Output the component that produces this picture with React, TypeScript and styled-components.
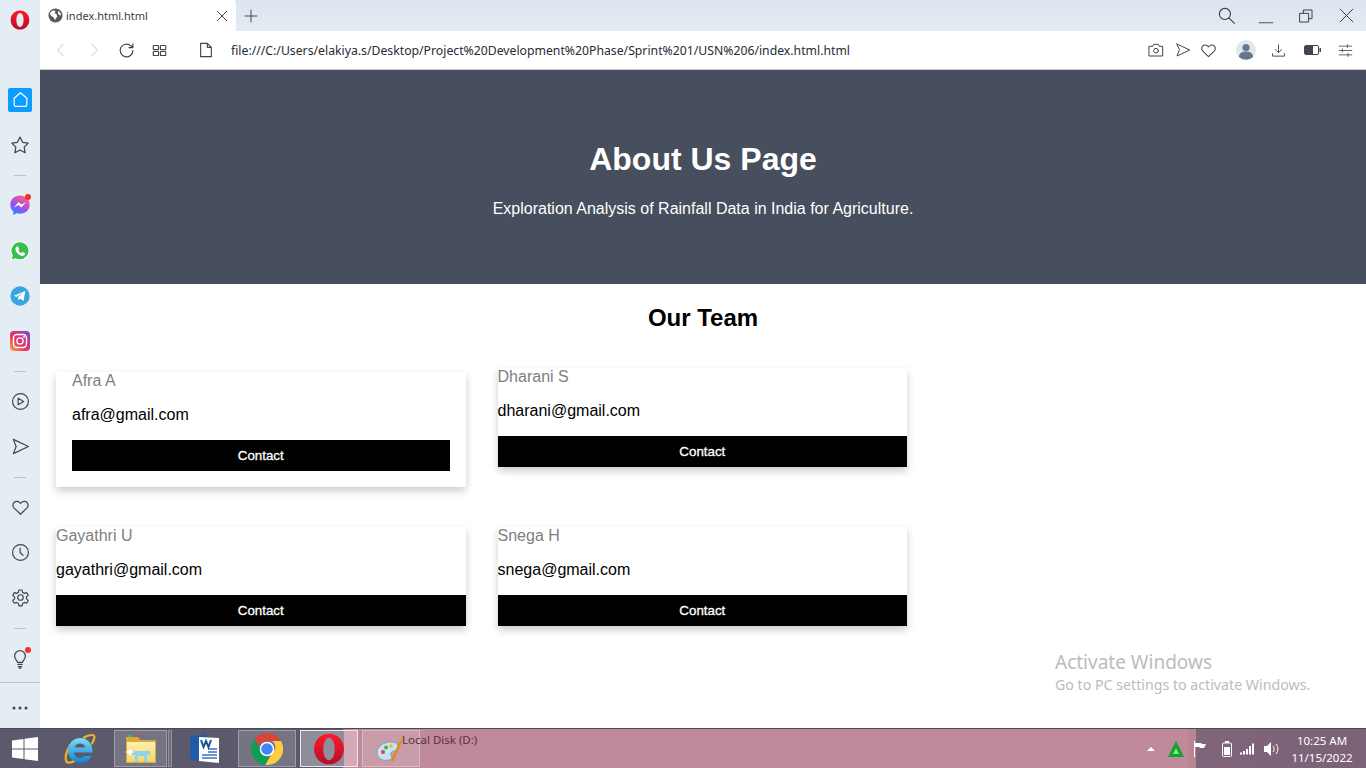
import styled, { createGlobalStyle } from "styled-components";
import type { ReactNode } from "react";

const Global = createGlobalStyle`
  html, body {
    margin: 0;
    padding: 0;
    background: #fff;
  }
  * {
    box-sizing: border-box;
  }
`;

const Screen = styled.div`
  position: relative;
  width: 1366px;
  height: 768px;
  overflow: hidden;
  display: flex;
  flex-direction: column;
  font-family: "Liberation Sans", Arial, sans-serif;
`;

const Browser = styled.div`
  flex: 1;
  min-height: 0;
  display: flex;
`;

/* left opera sidebar */
const Sidebar = styled.aside`
  width: 40px;
  flex: none;
  display: flex;
  flex-direction: column;
  background: #e4ecf4;
`;

const LogoSlot = styled.div`
  height: 40px;
  margin-bottom: 37px;
  display: flex;
  align-items: center;
  justify-content: center;
`;

const SideSlot = styled.div`
  position: relative;
  height: 45px;
  display: flex;
  align-items: center;
  justify-content: center;
`;

const HomeTile = styled.div`
  width: 24px;
  height: 24px;
  border-radius: 2px;
  background: #0a9dff;
  display: flex;
  align-items: center;
  justify-content: center;
`;

const SideSep = styled.div`
  height: 16px;
  display: flex;
  align-items: center;
  justify-content: center;
  &::after {
    content: "";
    width: 12px;
    height: 1px;
    background: #b9c3ce;
  }
`;

const Dot = styled.span`
  position: absolute;
  top: 11px;
  right: 9px;
  width: 6px;
  height: 6px;
  border-radius: 50%;
  background: #fb2c2c;
`;

const SideFooter = styled.div`
  margin-top: auto;
  height: 46px;
  border-top: 1px solid #bcc4cc;
  display: flex;
  align-items: center;
  justify-content: center;
  padding-top: 5px;
`;

const Window = styled.div`
  flex: 1;
  min-width: 0;
  display: flex;
  flex-direction: column;
`;

const TabStrip = styled.div`
  height: 31px;
  flex: none;
  display: flex;
  align-items: stretch;
  background: linear-gradient(#dde5ee, #e3eaf2);
`;

const Tab = styled.div`
  width: 196px;
  background: #fff;
  border-top-right-radius: 3px;
  display: flex;
  align-items: center;
  padding: 0 6px 0 8px;
  gap: 3px;
  font-family: "Noto Sans", sans-serif;
  font-size: 11px;
  color: #3a3a4a;
`;

const TabTitle = styled.span`
  flex: 1;
`;

const NewTab = styled.div`
  width: 30px;
  display: flex;
  align-items: center;
  justify-content: center;
`;

const WinControls = styled.div`
  margin-left: auto;
  display: flex;
`;

const WinButton = styled.div`
  width: 40px;
  display: flex;
  align-items: center;
  justify-content: center;
`;

const AddressBar = styled.div`
  height: 39px;
  flex: none;
  display: flex;
  align-items: center;
  padding-left: 4px;
  background: #fff;
  border-bottom: 1px solid #c6cacf;
`;

const ToolSlot = styled.div<{ $w?: number; $ml?: number }>`
  width: ${(p) => p.$w ?? 33}px;
  margin-left: ${(p) => p.$ml ?? 0}px;
  flex: none;
  display: flex;
  align-items: center;
  justify-content: center;
`;

const Url = styled.div`
  margin-left: 9px;
  font-family: "Noto Sans", sans-serif;
  font-size: 12.24px;
  color: #2a2a35;
  white-space: nowrap;
`;

const ToolsRight = styled.div`
  margin-left: auto;
  padding-right: 8px;
  display: flex;
  align-items: center;
`;

const Page = styled.main`
  flex: 1;
  min-height: 0;
  background: #fff;
`;

const Hero = styled.header`
  padding: 50px;
  background: #474e5d;
  color: #fff;
  text-align: center;
  h1 {
    margin: 21.44px 0;
    font-size: 32px;
    line-height: 37px;
  }
  p {
    margin: 16px 0;
    font-size: 16px;
    line-height: 18px;
  }
`;

const Heading = styled.h2`
  margin: 19.92px 0 0;
  font-size: 24px;
  line-height: 28px;
  text-align: center;
  color: #000;
`;

const TeamGrid = styled.section`
  display: grid;
  grid-template-columns: repeat(3, 33.3%);
  row-gap: 40px;
  align-items: start;
  margin-top: 36px;
`;

const Column = styled.div<{ $row: number }>`
  padding: 0 16px;
  grid-row: ${(p) => p.$row};
`;

const Card = styled.article<{ $padded?: boolean }>`
  margin-top: ${(p) => (p.$padded ? 4 : 0)}px;
  padding: ${(p) => (p.$padded ? "0 16px 16px" : "0")};
  box-shadow: 0 4px 8px 0 rgba(0, 0, 0, 0.2);
  background: #fff;
`;

const Name = styled.div`
  margin-bottom: 16px;
  font-size: 16px;
  line-height: 18px;
  color: #808080;
`;

const Email = styled.div`
  margin-bottom: 16px;
  font-size: 16px;
  line-height: 18px;
  color: #000;
`;

const ContactButton = styled.button`
  display: block;
  width: 100%;
  height: 31px;
  padding: 0;
  border: 0;
  background: #000;
  color: #fff;
  font-family: "Liberation Sans", Arial, sans-serif;
  font-size: 13.33px;
  -webkit-text-stroke: 0.3px #fff;
  text-align: center;
`;

const Watermark = styled.div`
  position: absolute;
  left: 1055px;
  top: 650px;
  font-family: "Noto Sans", sans-serif;
  color: #bcbcbc;
  pointer-events: none;
  white-space: nowrap;
  strong {
    display: block;
    font-weight: 400;
    font-size: 19px;
    line-height: 25px;
  }
  span {
    display: block;
    margin-top: 1px;
    font-size: 14.2px;
    line-height: 18px;
  }
`;

/* windows taskbar */
const Taskbar = styled.footer`
  position: relative;
  height: 40px;
  flex: none;
  display: flex;
  align-items: stretch;
  padding: 1px 0;
  background: linear-gradient(
    90deg,
    #5a5a6c 0,
    #5a5a6c 343px,
    #bf8a9a 343px,
    #bf8a9a 1188px,
    #b98595 1188px,
    #b98595 1196px,
    #80657a 1196px,
    #7c6277 100%
  );
  border-top: 1px solid #4b4a58;
`;

const StartSlot = styled.div`
  width: 50px;
  display: flex;
  align-items: center;
  justify-content: center;
`;

const TaskApp = styled.div<{ $w: number; $ml?: number; $boxed?: boolean; $active?: boolean }>`
  width: ${(p) => p.$w}px;
  margin-left: ${(p) => p.$ml ?? 0}px;
  flex: none;
  display: flex;
  align-items: center;
  justify-content: center;
  border: ${(p) =>
    p.$active
      ? "1px solid #f0e6ea"
      : p.$boxed
      ? "1px solid rgba(255,255,255,0.3)"
      : "1px solid transparent"};
  background: ${(p) =>
    p.$active
      ? "linear-gradient(90deg,#8e8d9a 0,#8e8d9a 43px,#d6a9b6 43px)"
      : p.$boxed
      ? "rgba(255,255,255,0.16)"
      : "transparent"};
`;

const Sliver = styled.div`
  width: 4px;
  margin-left: 1px;
  flex: none;
  border: 1px solid rgba(255, 255, 255, 0.25);
  background: rgba(255, 255, 255, 0.12);
`;

const DiskLabel = styled.span`
  position: absolute;
  left: 402px;
  top: 3px;
  font-family: "Noto Sans", sans-serif;
  font-size: 11.5px;
  line-height: 16px;
  color: #5f2f40;
  white-space: nowrap;
`;

const Tray = styled.div`
  margin-left: auto;
  padding-right: 2px;
  display: flex;
  align-items: center;
`;

const TraySlot = styled.div<{ $ml?: number }>`
  width: 16px;
  margin-left: ${(p) => p.$ml ?? 0}px;
  flex: none;
  display: flex;
  align-items: center;
  justify-content: center;
`;

const Clock = styled.div`
  width: 84px;
  flex: none;
  text-align: center;
  font-family: "Noto Sans", sans-serif;
  font-size: 11.5px;
  line-height: 17px;
  color: #fff;
`;

type IconProps = { size?: number; color?: string; w?: number };

const Ico = ({ size = 18, color = "#41454f", w = 1.5, children }: IconProps & { children: ReactNode }) => (
  <svg
    width={size}
    height={size}
    viewBox="0 0 24 24"
    fill="none"
    stroke={color}
    strokeWidth={w}
    strokeLinecap="round"
    strokeLinejoin="round"
  >
    {children}
  </svg>
);

const OperaLogo = ({ size = 20 }: { size?: number }) => (
  <svg width={size} height={size} viewBox="0 0 24 24">
    <defs>
      <linearGradient id={`op${size}`} x1="0" y1="0" x2="0" y2="1">
        <stop offset="0" stopColor="#ff1b2d" />
        <stop offset="1" stopColor="#b70c25" />
      </linearGradient>
    </defs>
    <path
      fillRule="evenodd"
      fill={`url(#op${size})`}
      d="M12 0.5C5.4 0.5 0.8 5.6 0.8 12s4.6 11.5 11.2 11.5S23.2 18.4 23.2 12 18.6 0.5 12 0.5zM12 3.6c2.6 0 4.3 3.7 4.3 8.4s-1.7 8.4-4.3 8.4-4.3-3.7-4.3-8.4S9.400 3.600 12 3.600z"
    />
  </svg>
);

const HomeIcon = () => (
  <Ico size={19} color="#fff" w={1.5}>
    <path d="M4 10.500 12 3.500l8 7V19a1.800 1.800 0 0 1-1.800 1.800H5.800A1.800 1.800 0 0 1 4 19z" />
  </Ico>
);
const StarIcon = () => (
  <Ico size={20} w={1.5}>
    <path d="M12 2.500 15.100 8.800 21.800 9.700 17 14.500 18.100 21.300 12 18 5.900 21.300 7 14.500 2.200 9.700 8.900 8.800z" />
  </Ico>
);
const SendIcon = ({ size = 19 }: { size?: number }) => (
  <Ico size={size}>
    <path d="M3 3 22 12 3 21 6.500 12z" />
  </Ico>
);
const HeartIcon = ({ size = 19 }: { size?: number }) => (
  <Ico size={size}>
    <path d="M12 20.500 4 12.800C1.800 10.500 2 7.200 4 5.400c2.200-1.900 5.600-1.500 8 1.400 2.400-2.900 5.800-3.300 8-1.400 2 1.800 2.200 5.100 0 7.400z" />
  </Ico>
);

const Messenger = () => (
  <svg width="20" height="21" viewBox="0 0 20 21">
    <defs>
      <linearGradient id="msg" x1="0.2" y1="1" x2="0.8" y2="0">
        <stop offset="0" stopColor="#1f8bff" />
        <stop offset="0.45" stopColor="#a24cf0" />
        <stop offset="1" stopColor="#ff6a6a" />
      </linearGradient>
    </defs>
    <path
      fill="url(#msg)"
      d="M10 .5C4.500.5.300 4.400.300 9.700c0 2.800 1.100 5.100 3 6.700V20l3.300-1.800c1 .3 2.200.5 3.400.5 5.500 0 9.700-3.900 9.700-9S15.500.5 10 .5z"
    />
    <path fill="#fff" d="M4 12.500 8.500 7l3 2.500L16 7l-4.500 5.500-3-2.500z" />
  </svg>
);

const Whatsapp = () => (
  <svg width="20" height="20" viewBox="0 0 20 20">
    <path fill="#fff" d="M10 .3a9.500 9.500 0 0 0-8.200 14.300L.4 19.700l5.300-1.400A9.500 9.500 0 1 0 10 .3z" />
    <path fill="#38bf4e" d="M10 1.300a8.500 8.500 0 0 0-7.200 13l-1 3.900 4-1A8.500 8.500 0 1 0 10 1.300z" />
    <path
      fill="#fff"
      d="M7.300 5.200c-.5 0-1.900 1-1.900 2.900 0 3 3.900 6.800 7 6.800 1.800 0 2.700-1.400 2.700-2.200 0-.6-2.100-1.700-2.600-1.700-.4 0-.8 1-1.200 1-.8 0-2.800-1.900-2.800-2.700 0-.4.800-.8.800-1.200 0-.5-1.100-2.900-2-2.900z"
    />
  </svg>
);

const Telegram = () => (
  <svg width="20" height="20" viewBox="0 0 20 20">
    <circle cx="10" cy="10" r="9.700" fill="#37a6de" />
    <path fill="#fff" d="M3.800 9.800 15.300 5l-1.800 10-3.400-2.500-1.700 1.700-.4-3 4.800-4.400L6.500 11z" />
  </svg>
);

const Instagram = () => (
  <svg width="20" height="20" viewBox="0 0 20 20">
    <defs>
      <linearGradient id="ig" x1="0" y1="1" x2="1" y2="0">
        <stop offset="0" stopColor="#fdb43a" />
        <stop offset="0.4" stopColor="#e8355f" />
        <stop offset="0.75" stopColor="#b53a9f" />
        <stop offset="1" stopColor="#5b55c7" />
      </linearGradient>
    </defs>
    <rect width="20" height="20" rx="4" fill="url(#ig)" />
    <rect x="3.500" y="3.500" width="13" height="13" rx="3.500" fill="none" stroke="#fff" strokeWidth="1.400" />
    <circle cx="10" cy="10" r="3.100" fill="none" stroke="#fff" strokeWidth="1.400" />
    <circle cx="14" cy="6" r=".9" fill="#fff" />
  </svg>
);

const PlayIcon = () => (
  <Ico size={19}>
    <circle cx="12" cy="12" r="10" />
    <path d="M9 8l7 4-7 4z" />
  </Ico>
);
const ClockIcon = () => (
  <Ico size={19}>
    <circle cx="12" cy="12" r="10" />
    <path d="M11.500 6.500V12l3.500 3.500" />
  </Ico>
);
const GearIcon = () => (
  <Ico size={19}>
    <circle cx="12" cy="12" r="3.500" />
    <path d="M10 2.500h4l.6 3 2.300 1.300 2.900-1 2 3.400-2.300 2v2.600l2.300 2-2 3.400-2.900-1-2.300 1.300-.6 3h-4l-.6-3-2.300-1.300-2.900 1-2-3.400 2.300-2v-2.600l-2.300-2 2-3.400 2.900 1 2.300-1.300z" />
  </Ico>
);
const BulbIcon = () => (
  <Ico size={20}>
    <path d="M9 16c0-2-3.500-3.300-3.500-7.500A6.500 6.500 0 0 1 18.500 8.500c0 4.200-3.500 5.500-3.500 7.500zM9.500 18.500h5M10 21h4M11 23h2" />
  </Ico>
);

const TraySignal = () => (
  <svg width="16" height="12" viewBox="0 0 16 12" fill="#fff">
    <rect x="0" y="9.500" width="2" height="2" />
    <rect x="3" y="8" width="2" height="3.500" />
    <rect x="6" y="6" width="2" height="5.500" />
    <rect x="9" y="3" width="2" height="8.500" />
    <rect x="12" y="0.500" width="2" height="11" />
  </svg>
);

const IEIcon = () => (
  <svg width="32" height="32" viewBox="0 0 32 32">
    <defs>
      <linearGradient id="ie" x1="0" y1="0" x2="0" y2="1">
        <stop offset="0" stopColor="#7fdcf8" />
        <stop offset="1" stopColor="#0f83d6" />
      </linearGradient>
    </defs>
    <path
      fill="none"
      stroke="#f0b51e"
      strokeWidth="2.200"
      strokeLinecap="round"
      d="M10 8C4 13 0 24 2.500 28.500 4 30.500 8 29.500 11 27.500M20 4.500c5-3 10.500-3.500 10.500-.5 0 2-1 4-2.500 6.500"
    />
    <path
      fill="url(#ie)"
      fillRule="evenodd"
      d="M16 5A12.500 12.500 0 1 0 27.500 23H20.500A6 6 0 0 1 10 19.500H28.500C29 11 24 5 16 5ZM10.500 14.500A5.800 5.800 0 0 1 21.500 14.500Z"
    />
  </svg>
);

const FolderIcon = () => (
  <svg width="32" height="30" viewBox="0 0 32 30">
    <defs>
      <linearGradient id="fold" x1="0" y1="0" x2="0" y2="1">
        <stop offset="0" stopColor="#fdf0ae" />
        <stop offset="1" stopColor="#f5d469" />
      </linearGradient>
    </defs>
    <path fill="#d9a93e" d="M1 3h12l2 3h16v23H1z" />
    <path fill="url(#fold)" d="M2 8h28v20H2z" />
    <rect x="3" y="1" width="4" height="2" fill="#4bb24b" />
    <rect x="12" y="1" width="3" height="2" fill="#d9453d" />
    <path fill="#8fd4ea" d="M7 17h18v4h-3v7h-3v-6h-6v6h-3v-7H7z" />
    <path fill="#fff" d="M5 14l1.500 3L10 18l-3.500 1L5 22l-1.500-3L0 18l3.500-1z" />
  </svg>
);

const WordIcon = () => (
  <svg width="32" height="32" viewBox="0 0 32 32">
    <path fill="#1e5bab" d="M1 4l16-3v28L2 27z" />
    <path fill="#fff" d="M10 4l20 1v25l-20-2z" />
    <path d="M19 16h9M19 19h9M13 22h15M13 25h15" stroke="#3a72bb" strokeWidth="1.300" />
    <path d="M12 7l2.500 7 2.500-6 2.500 6 2.500-7" stroke="#1e4f9a" strokeWidth="2" fill="none" />
  </svg>
);

const ChromeIcon = () => (
  <svg width="32" height="32" viewBox="0 0 32 32">
    <path fill="#db4437" d="M16 0a16 16 0 0 1 13.900 8H16a8 8 0 0 0-7.700 5.800L3.600 6A16 16 0 0 1 16 0z" />
    <path fill="#0f9d58" d="M3.600 6l6.900 12a6.500 6.500 0 0 0 8.400 3.900l-4.600 10A16 16 0 0 1 3.600 6z" />
    <path fill="#ffcd40" d="M29.900 8A16 16 0 0 1 14.300 31.900l6.900-12A7 7 0 0 0 21 8z" />
    <circle cx="16" cy="16" r="7.300" fill="#fff" />
    <circle cx="16" cy="16" r="5.800" fill="#4285f4" />
  </svg>
);

const PaintIcon = () => (
  <svg width="32" height="32" viewBox="0 0 32 32">
    <path fill="#c6e3f2" stroke="#7fa3b8" d="M2 20c0-7 7-11 14-11 5 0 8 3 7 6-1 4-6 2-7 5-.8 3 2 4 0 6-4 3-14 1-14-6z" />
    <circle cx="8" cy="19" r="2" fill="#d9453d" />
    <circle cx="11" cy="14.500" r="2" fill="#4bb24b" />
    <circle cx="16" cy="13" r="1.800" fill="#f3b61f" />
    <path stroke="#e08a1e" strokeWidth="2.500" d="M17 28 27 6" />
    <path fill="#c9a26b" d="M25 7l2-5 2 1-.5 6z" />
  </svg>
);

const team = [
  { name: "Afra A", email: "afra@gmail.com", row: 1, padded: true },
  { name: "Dharani S", email: "dharani@gmail.com", row: 1 },
  { name: "Gayathri U", email: "gayathri@gmail.com", row: 2 },
  { name: "Snega H", email: "snega@gmail.com", row: 2 },
];

export default function App() {
  return (
    <Screen>
      <Global />
      <Browser>
        <Sidebar>
          <LogoSlot>
            <OperaLogo />
          </LogoSlot>
          <SideSlot>
            <HomeTile>
              <HomeIcon />
            </HomeTile>
          </SideSlot>
          <SideSlot>
            <StarIcon />
          </SideSlot>
          <SideSep />
          <SideSlot>
            <Messenger />
            <Dot />
          </SideSlot>
          <SideSlot>
            <Whatsapp />
          </SideSlot>
          <SideSlot>
            <Telegram />
          </SideSlot>
          <SideSlot>
            <Instagram />
          </SideSlot>
          <SideSep />
          <SideSlot>
            <PlayIcon />
          </SideSlot>
          <SideSlot>
            <SendIcon />
          </SideSlot>
          <SideSep />
          <SideSlot>
            <HeartIcon />
          </SideSlot>
          <SideSlot>
            <ClockIcon />
          </SideSlot>
          <SideSlot>
            <GearIcon />
          </SideSlot>
          <SideSep />
          <SideSlot>
            <BulbIcon />
            <Dot />
          </SideSlot>
          <SideFooter>
            <svg width="16" height="4" viewBox="0 0 16 4" fill="#41454f">
              <circle cx="2" cy="2" r="1.500" />
              <circle cx="8" cy="2" r="1.500" />
              <circle cx="14" cy="2" r="1.500" />
            </svg>
          </SideFooter>
        </Sidebar>
        <Window>
          <TabStrip>
            <Tab>
              <svg width="15" height="15" viewBox="0 0 16 16">
                <circle cx="8" cy="8" r="7.500" fill="#55585f" />
                <path
                  fill="#fff"
                  d="M3 4l3-1.500 2 1-1 2 2 1 1 2.500-1.500 2-1 2-1.500-3-2.500-1.500-1.500-2zM11 3l2.500 2.500.5 2.500-2-.5-1.500-2z"
                />
              </svg>
              <TabTitle>index.html.html</TabTitle>
              <Ico size={16} color="#3c3f48" w={1.5}>
                <path d="M5 5l14 14M19 5 5 19" />
              </Ico>
            </Tab>
            <NewTab>
              <Ico size={16} color="#3c3f48" w={1.4}>
                <path d="M12 3v18M3 12h18" />
              </Ico>
            </NewTab>
            <WinControls>
              <WinButton>
                <Ico size={19} color="#3c3f48" w={1.4}>
                  <circle cx="10" cy="10" r="7" />
                  <path d="M15 15l7 7" />
                </Ico>
              </WinButton>
              <WinButton>
                <Ico size={18} color="#3c3f48" w={1.2}>
                  <path d="M3 21h18" />
                </Ico>
              </WinButton>
              <WinButton>
                <Ico size={16} color="#3c3f48" w={1.5}>
                  <path d="M8 8V3h13v13h-5M3 8h13v13H3z" />
                </Ico>
              </WinButton>
              <WinButton>
                <Ico size={17} color="#3c3f48" w={1.4}>
                  <path d="M3 3l18 18M21 3 3 21" />
                </Ico>
              </WinButton>
            </WinControls>
          </TabStrip>
          <AddressBar>
            <ToolSlot>
              <Ico size={18} color="#c2c5ca" w={1.3}>
                <path d="M15 4l-7.500 8 7.500 8" />
              </Ico>
            </ToolSlot>
            <ToolSlot>
              <Ico size={18} color="#c2c5ca" w={1.3}>
                <path d="M9 4l7.500 8-7.500 8" />
              </Ico>
            </ToolSlot>
            <ToolSlot>
              <Ico size={17} color="#41454f" w={1.7}>
                <path d="M21 12a9 9 0 1 1-3-6.700L21 8M21 2.500V8h-5.500" />
              </Ico>
            </ToolSlot>
            <ToolSlot>
              <Ico size={15} color="#41454f" w={1.8}>
                <rect x="2" y="4" width="8.500" height="6.500" rx="1" />
                <rect x="13.500" y="4" width="8.500" height="6.500" rx="1" />
                <rect x="2" y="13.500" width="8.500" height="6.500" rx="1" />
                <rect x="13.500" y="13.500" width="8.500" height="6.500" rx="1" />
              </Ico>
            </ToolSlot>
            <ToolSlot $ml={13}>
              <Ico size={16} color="#41454f" w={1.7}>
                <path d="M4 2h10l6 6v14H4zM14 2v6h6" />
              </Ico>
            </ToolSlot>
            <Url>file:///C:/Users/elakiya.s/Desktop/Project%20Development%20Phase/Sprint%201/USN%206/index.html.html</Url>
            <ToolsRight>
              <ToolSlot $w={26}>
                <Ico size={16}>
                  <path d="M2 6.500h5l1.500-3h7l1.500 3h5V21H2z" />
                  <circle cx="12" cy="13" r="3.500" />
                </Ico>
              </ToolSlot>
              <ToolSlot $w={26} $ml={1}>
                <SendIcon size={16} />
              </ToolSlot>
              <ToolSlot $w={26} $ml={-1}>
                <HeartIcon size={17} />
              </ToolSlot>
              <ToolSlot $w={30} $ml={10}>
                <svg width="20" height="20" viewBox="0 0 20 20">
                  <circle cx="10" cy="10" r="10" fill="#e0e7ee" />
                  <circle cx="10" cy="7.500" r="3.600" fill="#66768c" />
                  <path fill="#66768c" d="M3 17c0-4 3-5.500 7-5.500s7 1.500 7 5.500a10 10 0 0 1-14 0z" />
                </svg>
              </ToolSlot>
              <ToolSlot $w={26} $ml={4}>
                <Ico size={15}>
                  <path d="M12 3v12M7 10.500l5 5 5-5M2.500 17v4h19v-4" />
                </Ico>
              </ToolSlot>
              <ToolSlot $w={26} $ml={8}>
                <svg width="17" height="10" viewBox="0 0 17 10">
                  <rect x=".5" y=".5" width="14" height="9" rx="1.500" fill="#fff" stroke="#41454f" />
                  <rect x="1" y="1" width="8" height="8" fill="#41454f" />
                  <rect x="15.500" y="3" width="1.500" height="4" fill="#41454f" />
                </svg>
              </ToolSlot>
              <ToolSlot $w={26} $ml={7}>
                <Ico size={15} w={1.3}>
                  <path d="M2 5h20M2 12h20M2 19h20M15 2.500v5M7 9.500v5M16 16.500v5" />
                </Ico>
              </ToolSlot>
            </ToolsRight>
          </AddressBar>
          <Page>
            <Hero>
              <h1>About Us Page</h1>
              <p>Exploration Analysis of Rainfall Data in India for Agriculture.</p>
            </Hero>
            <Heading>Our Team</Heading>
            <TeamGrid>
              {team.map((m) => (
                <Column key={m.name} $row={m.row}>
                  <Card $padded={m.padded}>
                    <Name>{m.name}</Name>
                    <Email>{m.email}</Email>
                    <ContactButton>Contact</ContactButton>
                  </Card>
                </Column>
              ))}
            </TeamGrid>
          </Page>
        </Window>
      </Browser>
      <Watermark>
        <strong>Activate Windows</strong>
        <span>Go to PC settings to activate Windows.</span>
      </Watermark>
      <Taskbar>
        <StartSlot>
          <svg width="26" height="26" viewBox="0 0 26 26" fill="#fff">
            <path d="M0 4.500 11.500 3v9.500H0zM12.500 2.800 26 1v11.500H12.500zM0 13.500h11.500V23L0 21.500zM12.500 13.500H26V25l-13.500-1.800z" />
          </svg>
        </StartSlot>
        <TaskApp $w={60}>
          <IEIcon />
        </TaskApp>
        <TaskApp $w={53} $ml={4} $boxed>
          <FolderIcon />
        </TaskApp>
        <Sliver />
        <TaskApp $w={58} $ml={4}>
          <WordIcon />
        </TaskApp>
        <TaskApp $w={58} $ml={4} $boxed>
          <ChromeIcon />
        </TaskApp>
        <TaskApp $w={58} $ml={4} $active>
          <OperaLogo size={32} />
        </TaskApp>
        <TaskApp $w={58} $ml={4} $boxed>
          <PaintIcon />
        </TaskApp>
        <DiskLabel>Local Disk (D:)</DiskLabel>
        <Tray>
          <TraySlot>
            <svg width="8" height="4" viewBox="0 0 8 4" fill="#fff">
              <path d="M0 4l4-4 4 4z" />
            </svg>
          </TraySlot>
          <TraySlot $ml={9}>
            <svg width="16" height="16" viewBox="0 0 16 16">
              <path fill="#0fa32b" d="M8 0l8 16H0z" />
              <path fill="#7cf07c" d="M8 7l3 6H5z" />
            </svg>
          </TraySlot>
          <TraySlot $ml={8}>
            <svg width="14" height="16" viewBox="0 0 14 16">
              <path stroke="#fff" strokeWidth="1" d="M1.500 0v16" />
              <path fill="#fff" d="M2 2h6l1 1h4l-2 4H7L6 6H2z" />
            </svg>
          </TraySlot>
          <TraySlot $ml={11}>
            <svg width="10" height="16" viewBox="0 0 10 16">
              <rect x=".5" y="2" width="9" height="13.500" rx="1" fill="none" stroke="#fff" />
              <rect x="3" y="0" width="4" height="2" fill="#fff" />
              <rect x="2" y="6" width="6" height="8" fill="#fff" />
            </svg>
          </TraySlot>
          <TraySlot $ml={5}>
            <TraySignal />
          </TraySlot>
          <TraySlot $ml={8}>
            <svg width="16" height="14" viewBox="0 0 16 14">
              <path fill="#fff" d="M0 4h3l4-4v14l-4-4H0z" />
              <path d="M9 4c1.500 1.500 1.500 4.500 0 6M12 2c2.500 3 2.500 7 0 10" stroke="#fff" fill="none" />
            </svg>
          </TraySlot>
          <Clock>
            10:25 AM
            <br />
            11/15/2022
          </Clock>
        </Tray>
      </Taskbar>
    </Screen>
  );
}
